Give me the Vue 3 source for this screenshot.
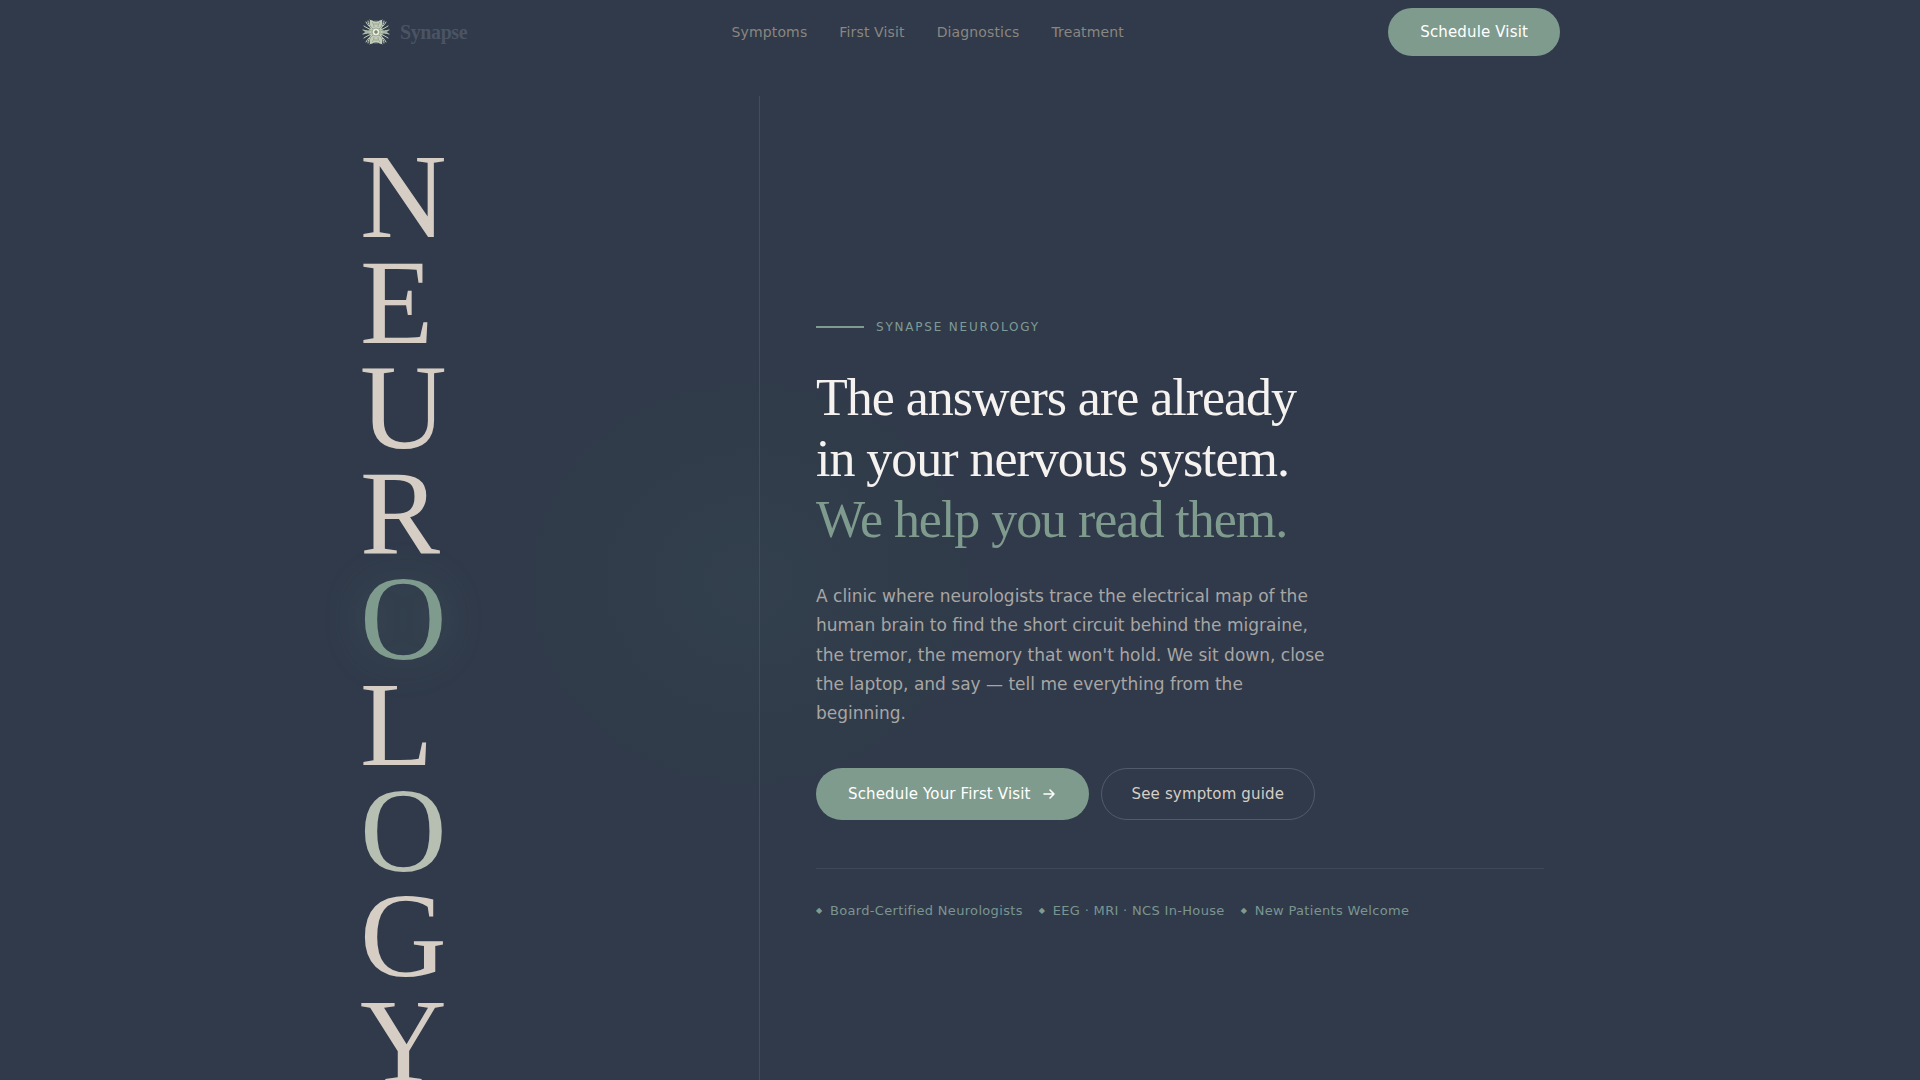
<script setup>
const links = ['Symptoms', 'First Visit', 'Diagnostics', 'Treatment']
const letters = [
  { char: 'N' },
  { char: 'E' },
  { char: 'U' },
  { char: 'R' },
  { char: 'O', tone: 'glow' },
  { char: 'L' },
  { char: 'O', tone: 'soft' },
  { char: 'G' },
  { char: 'Y' },
]
const facts = ['Board-Certified Neurologists', 'EEG · MRI · NCS In-House', 'New Patients Welcome']
const quadrants = ['', 'translate(28 0) scale(-1 1)', 'translate(0 28) scale(1 -1)', 'rotate(180 14 14)']
</script>

<template>
  <div class="page">
    <header class="site-header">
      <div class="bar">
        <a class="brand" href="#">
          <svg class="logo" viewBox="0 0 28 28" aria-hidden="true">
            <g v-for="quadrant in quadrants" :key="quadrant" :transform="quadrant || null">
              <path
                d="M14 4C12 4 11 2 8 2c0 2-1 3 0 5l1 3-2 2 1 2h6z"
                fill="#d3dcc6" fill-opacity=".9"
              />
              <g fill="none" stroke="#c3cfb8" stroke-width="1" stroke-linecap="round">
                <path d="M11 12C8 9 6 8 4 4M10 12C7 11 5 10 2 8M10 13C7 13 4 13 1 12M9 14H3M9 10C7 7 6 5 6 3M13 8V3M11 8C10 5 9 3 8 2" />
              </g>
              <g fill="none" stroke="#7c8a78" stroke-width=".6">
                <path d="M12 9c0-2-1-4-2-5M11 11L8 8M10 13L6 12M13 7V5" />
              </g>
            </g>
            <circle cx="14" cy="14" r="4" fill="#e6ebda" stroke="#8b9983" stroke-width=".8" />
            <path d="M14 12v4M12 14h4" stroke="#5b6858" stroke-width="1" />
          </svg>
          <span>Synapse</span>
        </a>
        <nav class="nav" aria-label="Main">
          <a v-for="link in links" :key="link" href="#">{{ link }}</a>
        </nav>
        <button class="btn primary compact" type="button">Schedule Visit</button>
      </div>
    </header>

    <main class="hero">
      <div class="word-column">
        <div class="word" role="img" aria-label="Neurology">
          <span v-for="(letter, i) in letters" :key="i" :class="letter.tone">{{ letter.char }}</span>
        </div>
      </div>

      <section class="intro">
        <p class="eyebrow">Synapse Neurology</p>
        <h1>
          The answers are already<br />in your nervous system.<br /><em>We help you read them.</em>
        </h1>
        <p class="lead">
          A clinic where neurologists trace the electrical map of the human brain to find the short
          circuit behind the migraine, the tremor, the memory that won't hold. We sit down, close the
          laptop, and say — tell me everything from the beginning.
        </p>
        <div class="actions">
          <button class="btn primary" type="button">
            Schedule Your First Visit
            <svg class="arrow" viewBox="0 0 16 16" aria-hidden="true">
              <path
                d="M3 8h10M9 4l4 4-4 4" fill="none" stroke="currentColor" stroke-width="1.6"
                stroke-linecap="round" stroke-linejoin="round"
              />
            </svg>
          </button>
          <button class="btn outline" type="button">See symptom guide</button>
        </div>
        <ul class="facts">
          <li v-for="fact in facts" :key="fact">{{ fact }}</li>
        </ul>
      </section>
    </main>
  </div>
</template>

<style>
body {
  margin: 0;
  background: #303a4a;
}
</style>

<style scoped>
.page {
  height: 100vh;
  overflow: hidden;
  color: #d6cec5;
  font-family: "DejaVu Sans", sans-serif;
  background:
    radial-gradient(ellipse 260px 240px at 39% 54%, rgba(58, 82, 84, 0.22), rgba(58, 82, 84, 0) 100%),
    #303a4a;
}

.site-header {
  padding: 0 24px;
}

.bar {
  display: flex;
  align-items: center;
  justify-content: space-between;
  max-width: 1200px;
  height: 64px;
  margin: 0 auto;
}

.brand {
  display: flex;
  align-items: center;
  gap: 8px;
  color: #4a5464;
  font: bold 20px/28px "Liberation Serif", serif;
  letter-spacing: -0.02em;
  text-decoration: none;
}

.logo {
  width: 32px;
  height: 28px;
}

.nav {
  display: flex;
  gap: 32px;
}

.nav a {
  color: #8a8680;
  font-size: 14px;
  line-height: 24px;
  letter-spacing: 0.01em;
  text-decoration: none;
}

.btn {
  display: inline-flex;
  align-items: center;
  gap: 10px;
  box-sizing: border-box;
  height: 52px;
  padding: 0 32px;
  border: 0;
  border-radius: 26px;
  font: 15px/24px "DejaVu Sans", sans-serif;
  letter-spacing: 0.01em;
  cursor: pointer;
}

.primary {
  color: #fff;
  background: #7f9b8e;
}

.compact {
  height: 48px;
}

.outline {
  padding: 0 30px;
  border: 1px solid #515b6a;
  color: #d6cec5;
  background: transparent;
}

.arrow {
  width: 16px;
  height: 16px;
}

.hero {
  display: grid;
  grid-template-columns: 1fr 2fr;
  max-width: 1200px;
  margin: 32px auto 0;
}

.word-column {
  padding: 48px 0;
  border-right: 1px solid #424c5b;
}

.word {
  display: flex;
  flex-direction: column;
  font: 120px/0.88 "Liberation Serif", serif;
}

.word .glow {
  color: #7f9b8e;
  text-shadow: 0 0 40px rgba(110, 155, 142, 0.3);
}

.word .soft {
  color: #b7beb2;
}

.intro {
  display: flex;
  flex-direction: column;
  justify-content: center;
  padding: 48px 16px 48px 56px;
}

.eyebrow {
  display: flex;
  align-items: center;
  gap: 12px;
  margin: 0 0 30px;
  color: #7f9b96;
  font-size: 12px;
  line-height: 20px;
  letter-spacing: 0.15em;
  text-transform: uppercase;
}

.eyebrow::before {
  width: 48px;
  height: 2px;
  background: #7f9b8e;
  content: "";
}

h1 {
  margin: 0 0 32px;
  color: #f5f2f0;
  font: 52px/61px "Liberation Serif", serif;
  letter-spacing: -0.02em;
}

h1 em {
  color: #7f9b8e;
  font-style: normal;
}

.lead {
  max-width: 520px;
  margin: 0 0 40px;
  color: #a8a6a4;
  font-size: 17px;
  line-height: 1.72;
}

.actions {
  display: flex;
  gap: 12px;
}

.facts {
  display: flex;
  gap: 16px;
  margin: 48px 0 0;
  padding: 32px 0 0;
  border-top: 1px solid #3e4858;
  color: #7b9591;
  font-size: 13px;
  line-height: 20px;
  letter-spacing: 0.025em;
  list-style: none;
}

.facts li {
  display: flex;
  align-items: center;
  gap: 8px;
}

.facts li::before {
  width: 6px;
  color: #7f9b8e;
  font-size: 8px;
  letter-spacing: 0;
  content: "◆";
}
</style>
